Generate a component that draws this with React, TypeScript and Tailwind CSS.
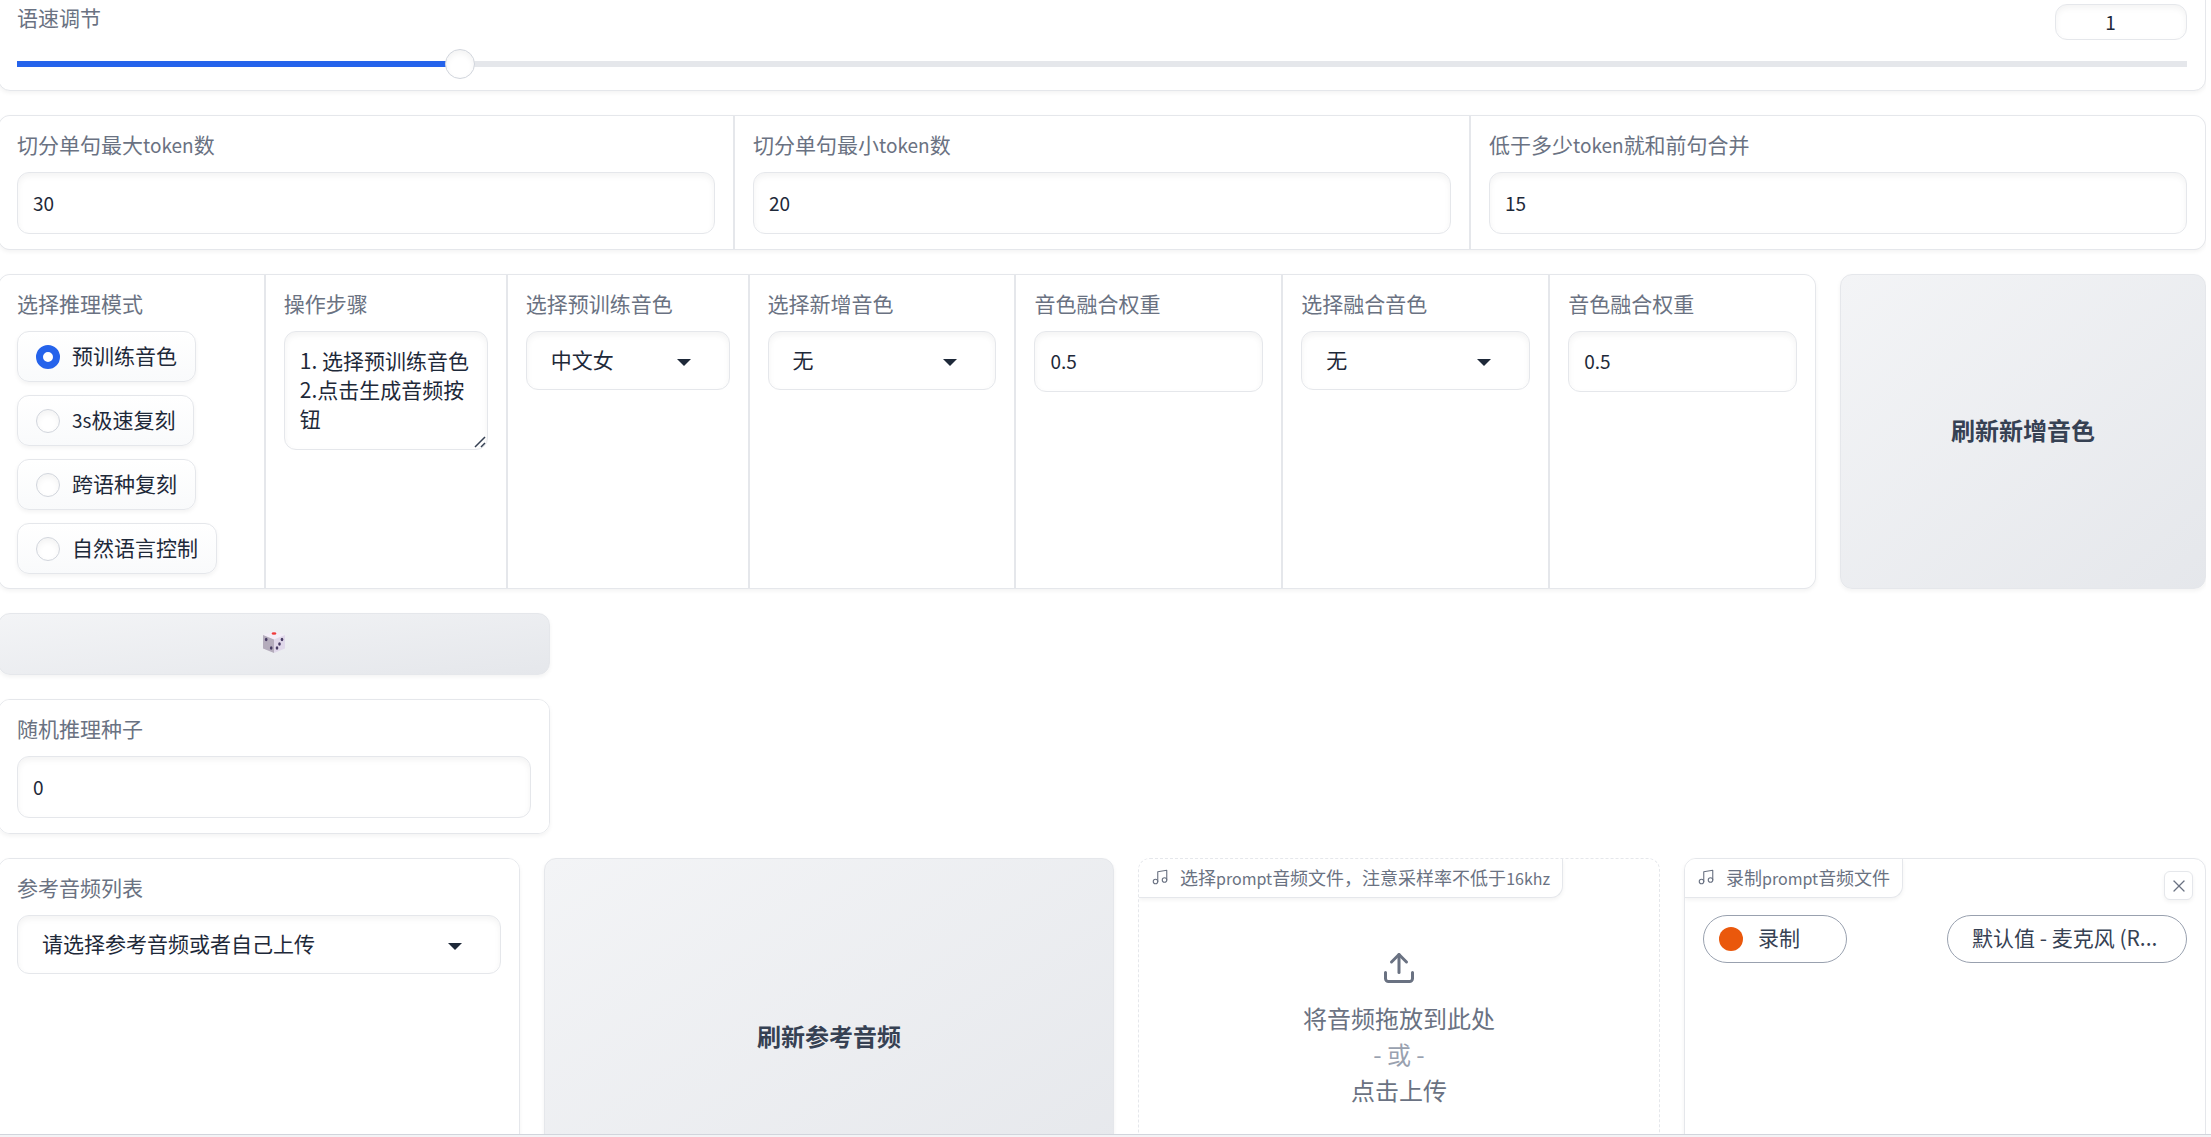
import { useId, useState, type ReactNode } from "react";
import { Upload, X } from "lucide-react";

const field =
  "w-full rounded-xl border border-gray-200 bg-white text-gray-800 shadow-[inset_0_3px_6px_rgba(0,0,0,0.05)] outline-none";
const card = "rounded-xl border border-gray-200 shadow-[0_2px_4px_rgba(0,0,0,0.05)]";
const grayButton =
  "flex items-center justify-center rounded-xl border border-gray-200 bg-linear-to-br from-gray-100 to-gray-200 pb-1 text-2xl font-bold text-gray-700 shadow-[0_2px_4px_rgba(0,0,0,0.05)]";

/* Latin runs are set slightly smaller than the Chinese text around them. */
function Mixed({ text, latin }: { text: string; latin: string }) {
  return (
    <>
      {text.split(/([A-Za-z0-9]+)/).map((part, i) =>
        i % 2 ? (
          <span key={i} className={latin}>
            {part}
          </span>
        ) : (
          part
        ),
      )}
    </>
  );
}

function Label({ id, children }: { id: string; children: string }) {
  return (
    <label htmlFor={id} className="mb-3.5 block text-[21px] leading-[27px] text-gray-500">
      <Mixed text={children} latin="text-[19px]" />
    </label>
  );
}

function Cell({ pad = "pb-[15px]", children }: { pad?: string; children: ReactNode }) {
  return <div className={`min-w-0 bg-white px-[18px] pt-[15px] ${pad}`}>{children}</div>;
}

function NumberField({ label, value, size = "h-[62px]" }: { label: string; value: number; size?: string }) {
  const id = useId();
  return (
    <Cell>
      <Label id={id}>{label}</Label>
      <input id={id} type="number" defaultValue={value} className={`${field} ${size} px-[15px] pb-0.5 text-[19px]`} />
    </Cell>
  );
}

function SelectField({ label, value }: { label: string; value: string }) {
  const id = useId();
  return (
    <Cell>
      <Label id={id}>{label}</Label>
      <div className="relative">
        <select id={id} className={`${field} h-[59px] appearance-none pr-12 pb-0.5 pl-6 text-[21px]`}>
          <option>{value}</option>
        </select>
        <svg
          viewBox="0 0 14 7"
          className="pointer-events-none absolute top-7 right-[39px] h-[7px] w-3.5 fill-gray-800"
        >
          <path d="M0 0h14L7 7z" />
        </svg>
      </div>
    </Cell>
  );
}

function Dice() {
  return (
    <svg viewBox="0 0 22 22" className="size-[22px]" role="img" aria-label="随机">
      <path d="M0 4 11 0l11 4-11 4.5z" fill="#f3eef8" />
      <path d="M0 4l11 4.500V22L0 17.500z" fill="#b4acbc" />
      <path d="M22 4 11 8.500V22l11-4.500z" fill="#e0d8ea" />
      <ellipse cx="11" cy="2.500" rx="2.400" ry="1.200" fill="#f03a3a" />
      <g fill="#483c64">
        <ellipse cx="3.200" cy="8.500" rx="1.300" ry="1.800" />
        <ellipse cx="8.200" cy="17" rx="1.300" ry="1.800" />
        <ellipse cx="19" cy="8.500" rx="1.300" ry="1.800" />
        <ellipse cx="16.500" cy="13" rx="1.300" ry="1.800" />
        <ellipse cx="14" cy="17" rx="1.300" ry="1.800" />
      </g>
    </svg>
  );
}

function MusicIcon() {
  return (
    <svg
      viewBox="0 0 24 24"
      className="size-[18px] shrink-0 fill-none stroke-gray-500"
      strokeWidth="1.5"
      strokeLinecap="round"
      strokeLinejoin="round"
    >
      <path d="M9 18V5l12-2v13" />
      <circle cx="6" cy="18" r="3" />
      <circle cx="18" cy="16" r="3" />
    </svg>
  );
}

function Tag({ children }: { children: string }) {
  return (
    <div className="flex h-[39px] w-fit items-center gap-[11px] rounded-br-xl border-r border-b border-gray-200 bg-white pr-3 pb-0.5 pl-3 text-lg text-gray-500 shadow-[0_2px_4px_rgba(0,0,0,0.05)]">
      <MusicIcon />
      <span className="whitespace-nowrap">
        <Mixed text={children} latin="text-base" />
      </span>
    </div>
  );
}

function SpeedSlider() {
  const [speed, setSpeed] = useState(1);
  const fill = ((speed - 0.5) / 2.5) * 100;
  return (
    <section className={`${card} bg-white px-[18px] pt-[15px] pb-[11px]`}>
      <div className="flex items-start justify-between">
        <label htmlFor="speed" className="text-[21px] leading-[27px] text-gray-500">
          语速调节
        </label>
        <div className="w-[132px]">
          <input
            type="number"
            aria-label="语速数值"
            value={speed}
            step={0.1}
            onChange={(e) => setSpeed(Number(e.target.value))}
            className={`${field} h-9 pr-[18px] pb-0.5 pl-3 text-center text-[19px]`}
          />
        </div>
      </div>
      <input
        id="speed"
        type="range"
        min={0.5}
        max={3}
        step={0.1}
        value={speed}
        onChange={(e) => setSpeed(Number(e.target.value))}
        style={{
          backgroundImage: `linear-gradient(to right, #2563eb ${fill}%, #e5e7eb ${fill}%)`,
        }}
        className="mt-[9px] block h-[30px] w-full appearance-none rounded-sm bg-[length:100%_6px] bg-center bg-no-repeat [&::-webkit-slider-thumb]:size-[30px] [&::-webkit-slider-thumb]:appearance-none [&::-webkit-slider-thumb]:rounded-full [&::-webkit-slider-thumb]:border [&::-webkit-slider-thumb]:border-gray-300 [&::-webkit-slider-thumb]:bg-white [&::-webkit-slider-thumb]:shadow-[inset_0_3px_6px_rgba(0,0,0,0.05)]"
      />
    </section>
  );
}

const modes = ["预训练音色", "3s极速复刻", "跨语种复刻", "自然语言控制"];

function ModePicker() {
  const [mode, setMode] = useState(modes[0]);
  return (
    <Cell pad="pb-3.5">
      <fieldset>
        <legend className="mb-3.5 block text-[21px] leading-[27px] text-gray-500">选择推理模式</legend>
        <div className="flex flex-col items-start gap-[13px]">
          {modes.map((m) => (
            <label
              key={m}
              className="flex h-[51px] items-center gap-3 rounded-xl border border-gray-200 bg-linear-to-b from-white to-gray-50 px-[18px] text-[21px] whitespace-nowrap text-gray-800 shadow-[0_2px_4px_rgba(0,0,0,0.05)]"
            >
              <input
                type="radio"
                name="mode"
                checked={mode === m}
                onChange={() => setMode(m)}
                className="size-6 appearance-none rounded-full border border-gray-300 bg-white shadow-[inset_0_3px_6px_rgba(0,0,0,0.05)] checked:border-[7px] checked:border-[#2563eb] checked:shadow-none"
              />
              <span className="pb-0.5">
                <Mixed text={m} latin="text-[19px]" />
              </span>
            </label>
          ))}
        </div>
      </fieldset>
    </Cell>
  );
}

export default function App() {
  return (
    <div className="flex h-screen flex-col overflow-hidden bg-white font-['Noto_Sans_CJK_SC',sans-serif]">
      <main className="-mt-3 mr-[5px] -ml-0.5 flex min-h-0 flex-1 flex-col gap-6 overflow-hidden *:shrink-0">
        <SpeedSlider />

        <section className={`${card} grid grid-cols-3 gap-0.5 overflow-hidden bg-gray-200`}>
          <NumberField label="切分单句最大token数" value={30} />
          <NumberField label="切分单句最小token数" value={20} />
          <NumberField label="低于多少token就和前句合并" value={15} />
        </section>

        <div className="grid grid-cols-[1818fr_366fr] gap-6">
          <section
            className={`${card} grid grid-cols-[265fr_240fr_240fr_265fr_265fr_265fr_265fr] gap-0.5 overflow-hidden bg-gray-200`}
          >
            <ModePicker />
            <Cell>
              <Label id="steps">操作步骤</Label>
              <div className="relative">
                <textarea
                  id="steps"
                  rows={3}
                  defaultValue={"1. 选择预训练音色\n2.点击生成音频按钮"}
                  className={`${field} block h-[119px] resize overflow-hidden px-[15px] pt-3.5 pb-4 text-[21px] leading-[29px] [&::-webkit-resizer]:bg-transparent`}
                />
                <svg
                  viewBox="0 0 12 12"
                  className="pointer-events-none absolute right-0.5 bottom-0.5 size-3 stroke-gray-700"
                  strokeWidth="1.5"
                >
                  <path d="M1 11 11 1M7 11l4-4" />
                </svg>
              </div>
            </Cell>
            <SelectField label="选择预训练音色" value="中文女" />
            <SelectField label="选择新增音色" value="无" />
            <NumberField label="音色融合权重" value={0.5} size="h-[61px]" />
            <SelectField label="选择融合音色" value="无" />
            <NumberField label="音色融合权重" value={0.5} size="h-[61px]" />
          </section>
          <button type="button" className={grayButton}>
            刷新新增音色
          </button>
        </div>

        <div className="flex w-1/4 flex-col gap-6">
          <button type="button" className={`${grayButton} h-[62px]`}>
            <Dice />
          </button>
          <section className={`${card} overflow-hidden`}>
            <NumberField label="随机推理种子" value={0} />
          </section>
        </div>

        <div className="grid h-[360px] grid-cols-[522fr_570fr_522fr_522fr] gap-6">
          <section className={`${card} overflow-hidden`}>
            <SelectField label="参考音频列表" value="请选择参考音频或者自己上传" />
          </section>

          <button type="button" className={grayButton}>
            刷新参考音频
          </button>

          <section className="overflow-hidden rounded-xl border border-dashed border-gray-200">
            <Tag>选择prompt音频文件，注意采样率不低于16khz</Tag>
            <button
              type="button"
              className="mt-[52px] flex w-full flex-col items-center text-2xl leading-9 text-gray-500"
            >
              <Upload className="mb-3.5 size-9" />
              <span>将音频拖放到此处</span>
              <span className="text-gray-400">- 或 -</span>
              <span>点击上传</span>
            </button>
          </section>

          <section className={`${card} relative overflow-hidden`}>
            <Tag>录制prompt音频文件</Tag>
            <button
              type="button"
              aria-label="关闭"
              className="absolute top-3 right-3 flex size-[29px] items-center justify-center rounded-md border border-gray-200 bg-white text-gray-500 shadow-[0_2px_4px_rgba(0,0,0,0.05)]"
            >
              <X className="size-5" strokeWidth={1.5} />
            </button>
            <div className="mt-[17px] flex items-center justify-between px-[18px] text-[21px] text-gray-700">
              <button
                type="button"
                className="flex h-12 w-36 items-center gap-[15px] rounded-full border border-gray-400 pl-[15px]"
              >
                <span className="size-6 rounded-full bg-[#ea580c]" />
                <span className="pb-0.5">录制</span>
              </button>
              <select
                aria-label="麦克风"
                className="h-12 w-60 appearance-none rounded-full border border-gray-400 bg-white px-6 pb-0.5"
              >
                <option>默认值 - 麦克风 (R...</option>
              </select>
            </div>
          </section>
        </div>
      </main>
      <footer className="h-[3px] border-t border-gray-300 bg-gray-100" />
    </div>
  );
}
